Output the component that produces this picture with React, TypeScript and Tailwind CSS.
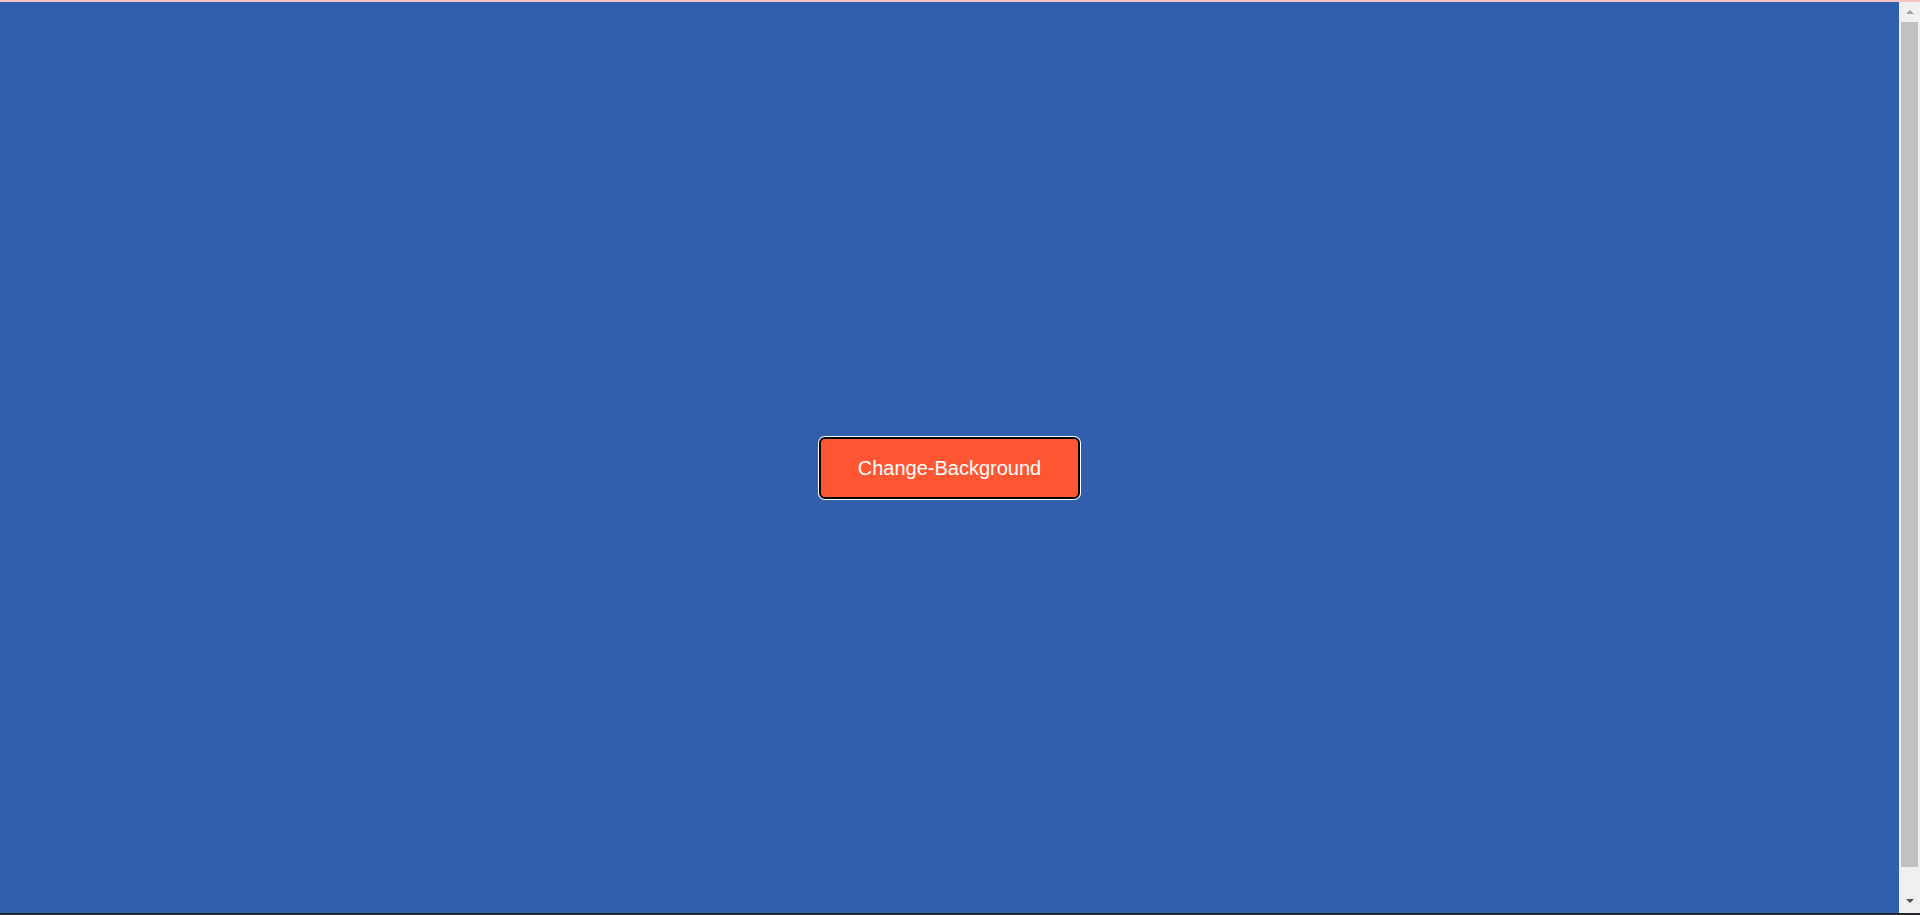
import { useState } from "react";

const colors = ["#325EAE", "#2E8B57", "#6A5ACD", "#B8860B", "#2F4F4F"];

export default function App() {
  const [index, setIndex] = useState(0);

  const changeBackground = () => {
    setIndex((prev) => (prev + 1) % colors.length);
  };

  return (
    <div className="h-[915px] w-full flex overflow-hidden font-['Liberation_Sans',Arial,sans-serif]">
      <div
        className="flex-1 flex items-center justify-center pt-[21px]"
        style={{ backgroundColor: colors[index] }}
      >
        <button
          type="button"
          onClick={changeBackground}
          className="w-[261px] h-[62px] rounded-[6px] border-2 border-black bg-[#FF5733] text-white text-[20px] leading-[23px] shadow-[0_0_0_1px_#ffffff] cursor-pointer"
        >
          Change-Background
        </button>
      </div>

      {/* scrollbar */}
      <div className="w-[21px] bg-[#f0f0f0] flex flex-col items-center">
        <div className="h-[20px] w-full flex items-center justify-center pt-[4px]">
          <div className="w-0 h-0 border-x-[4px] border-x-transparent border-b-[4px] border-b-[#a3a3a3]" />
        </div>
        <div className="flex-1 w-full px-[2px] pt-[2px] pb-[26px]">
          <div className="h-full w-full bg-[#c1c1c1]" />
        </div>
        <div className="h-[22px] w-full flex items-center justify-center pb-[6px]">
          <div className="w-0 h-0 border-x-[4px] border-x-transparent border-t-[4px] border-t-[#505050]" />
        </div>
      </div>

      <div className="fixed top-0 left-0 right-0 h-[2px] bg-[#f4c3c6]" />
      <div className="fixed bottom-0 left-0 right-0 h-[2px] bg-[#26262b]" />
    </div>
  );
}
